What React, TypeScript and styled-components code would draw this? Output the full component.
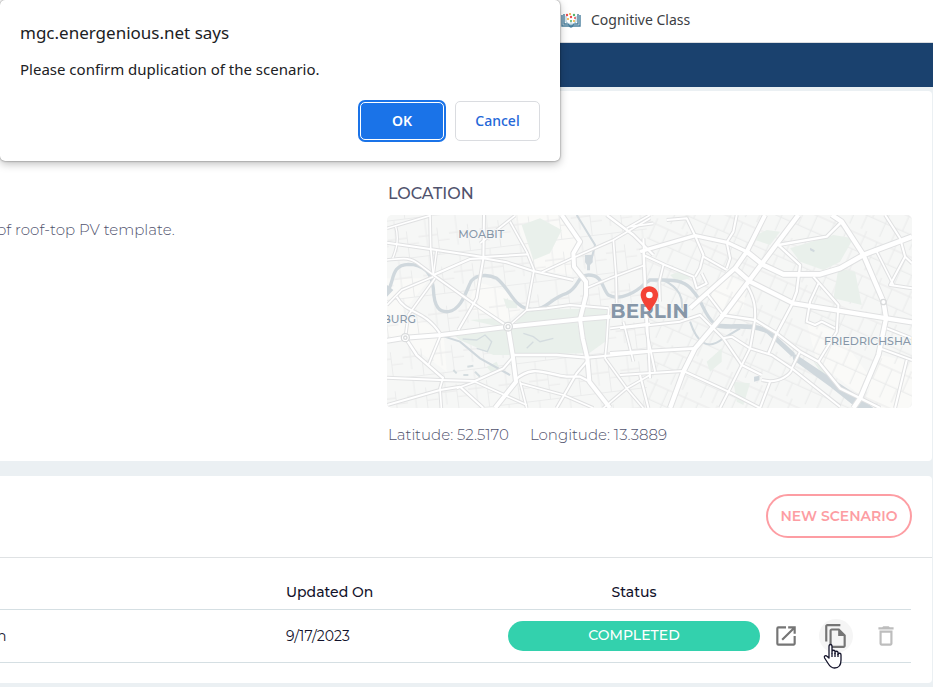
import React from "react";
import styled, { createGlobalStyle } from "styled-components";
import { MdDeleteOutline, MdOpenInNew, MdOutlineFileCopy } from "react-icons/md";

const GlobalStyle = createGlobalStyle`
  *, *::before, *::after { box-sizing: border-box; }
  body {
    margin: 0;
    background: #ebf0f3;
    color: #12122b;
    font-family: Montserrat, Inter, sans-serif;
    font-size: 14px;
    overflow-x: hidden;
  }
  button { font-family: inherit; cursor: pointer; }
`;

const Page = styled.div`
  position: relative;
  min-height: 100vh;
`;

const BookmarkBar = styled.nav`
  display: flex;
  align-items: center;
  height: 43px;
  padding: 0 0 3px 561px;
  background: #fff;
  border-bottom: 1px solid #dadce0;
`;

const Bookmark = styled.a`
  display: flex;
  align-items: center;
  gap: 10px;
  color: #3c4043;
  font: 14px/20px "Noto Sans", sans-serif;
  text-decoration: none;
  white-space: nowrap;
`;

const AppHeader = styled.header`
  height: 44px;
  background: #1a416e;
`;

const Content = styled.main`
  display: flex;
  flex-direction: column;
  gap: 15px;
  padding: 4px 1px 4px 0;
`;

const Card = styled.section`
  background: #fff;
  border-radius: 0 4px 4px 0;
`;

const ProjectCard = styled(Card)`
  display: grid;
  grid-template-columns: 14fr 19fr;
  padding: 92px 20px 16px 0;
  color: #50526d;
`;

const Description = styled.p`
  margin: 36px 0 0 -3px;
  font-size: 15px;
  line-height: 22px;
  font-weight: 300;
  white-space: nowrap;
`;

const SectionTitle = styled.h2`
  margin: 0 0 11px 1px;
  font-size: 16px;
  line-height: 21px;
  font-weight: 500;
  color: #50526d;
`;

const MapFrame = styled.svg`
  display: block;
  width: 100%;
  height: 193px;
  border-radius: 5px;
  background: #f6f7f6;
`;

const Coordinates = styled.div`
  display: flex;
  gap: 21px;
  margin: 16px 0 0 1px;
  font-size: 15px;
  line-height: 21px;
  font-weight: 300;
`;

const ScenarioCard = styled(Card)`
  padding-bottom: 20px;
`;

const ScenarioToolbar = styled.div`
  display: flex;
  justify-content: flex-end;
  padding: 18px 20px 19px;
  border-bottom: 1px solid #dfe2e4;
`;

const NewScenarioButton = styled.button`
  width: 146px;
  height: 44px;
  padding: 0;
  border: 2px solid #fd9da3;
  border-radius: 22px;
  background: #fff;
  color: #fd9da3;
  font-size: 14px;
  font-weight: 600;
  white-space: nowrap;
`;

const TableArea = styled.div`
  padding: 18px 21px 0 0;
`;

const ScenarioTable = styled.table`
  width: 100%;
  table-layout: fixed;
  border-collapse: collapse;
`;

const Column = styled.col<{ $width?: number }>`
  width: ${({ $width }) => ($width ? `${$width}px` : "auto")};
`;

const HeadCell = styled.th<{ $center?: boolean }>`
  height: 33px;
  padding: 0;
  border-bottom: 1px solid #d5dfe3;
  font-size: 14px;
  font-weight: 500;
  text-align: ${({ $center }) => ($center ? "center" : "left")};
`;

const Cell = styled.td`
  height: 53px;
  padding: 0;
  border-bottom: 1px solid #d5dfe3;
`;

const ScenarioName = styled.div`
  margin-left: -3px;
`;

const StatusPill = styled.div`
  height: 30px;
  border-radius: 15px;
  background: #33d1ad;
  color: #fff;
  line-height: 29px;
  font-weight: 500;
  text-align: center;
`;

const Actions = styled.div`
  display: flex;
  gap: 16px;
  padding-left: 9px;
`;

const IconButton = styled.button<{ $active?: boolean }>`
  position: relative;
  display: grid;
  place-items: center;
  width: 34px;
  height: 34px;
  padding: 0;
  border: 0;
  border-radius: 50%;
  background: ${({ $active }) => ($active ? "#f5f5f5" : "transparent")};
  color: #757575;
  &:disabled { color: #bdbdbd; }
`;

const Pointer = styled.svg`
  position: absolute;
  left: 4px;
  top: 24px;
  z-index: 1;
`;

const Dialog = styled.div`
  position: absolute;
  top: 0;
  left: 0;
  z-index: 2;
  width: 560px;
  padding: 20px;
  border-radius: 5px;
  background: #fff;
  box-shadow: 0 0 2px rgba(0, 0, 0, 0.55), 0 3px 8px rgba(0, 0, 0, 0.25);
  color: #202124;
  font-family: "Noto Sans", sans-serif;
`;

const DialogTitle = styled.h1`
  margin: 0;
  font-size: 17px;
  line-height: 26px;
  font-weight: 400;
`;

const DialogText = styled.p`
  margin: 12px 0 20px;
  font-size: 15px;
  line-height: 23px;
`;

const DialogButtons = styled.div`
  display: flex;
  align-items: center;
  justify-content: flex-end;
  gap: 11px;
`;

const DialogButton = styled.button<{ $primary?: boolean }>`
  width: ${({ $primary }) => ($primary ? 84 : 85)}px;
  height: ${({ $primary }) => ($primary ? 38 : 40)}px;
  padding: 0 0 2px;
  border: 1px solid ${({ $primary }) => ($primary ? "#fff" : "#dadce0")};
  border-radius: 5px;
  background: ${({ $primary }) => ($primary ? "#1a73e8" : "#fff")};
  box-shadow: ${({ $primary }) => ($primary ? "0 0 0 2px #1a73e8" : "none")};
  color: ${({ $primary }) => ($primary ? "#fff" : "#2467d8")};
  font-size: 14px;
  font-weight: ${({ $primary }) => ($primary ? 600 : 500)};
`;

type Road = [width: number, d: string];

const westRoads: Road[] = [
  [5, "M21 160L150 122"],
  [5, "M150 120L152 220L160 300"],
  [6, "M21 203L150 222L308 246L445 238"],
  [4, "M47 155Q60 200 38 250"],
  [5, "M21 255C70 250 90 245 120 270L160 300"],
  [4, "M170 225L160 300"],
  [6, "M160 300L270 252L310 250L380 262L460 288L580 315"],
  [6, "M312 120L310 250L290 370L235 465"],
  [6, "M160 300L280 385L384 455"],
  [5, "M405 122L300 205M390 140L440 230L462 285L440 405L390 450"],
  [5, "M485 292L580 248L700 195L810 130"],
  [5, "M160 305L65 345L21 390"],
  [5, "M165 310L85 420L76 488"],
  [6, "M50 365C80 420 130 400 180 475"],
  [5, "M180 485L145 570"],
  [7, "M76 488L110 540L190 610"],
  [6, "M21 608L180 615L285 618L370 580L400 545"],
  [5, "M184 699L180 640L190 605"],
  [6, "M21 690L180 645L240 635L310 699"],
  [5, "M230 640L285 620L440 690"],
  [7, "M400 540L530 540L622 548L810 530"],
  [7, "M405 615C460 565 500 600 560 605L600 605L630 620"],
  [5, "M420 620L440 699M420 625L550 660L640 699"],
  [6, "M620 560L590 595L530 699"],
  [5, "M675 550L740 640L790 699M740 640L810 600M740 640L670 699"],
  [5, "M686 400L680 500L675 550"],
  [6, "M440 405L500 400L570 390L686 400"],
  [5, "M700 195L708 300L710 390"],
  [7, "M680 120L760 180L820 240"],
  [6, "M790 190L795 320L810 610"],
  [5, "M618 340L690 310L795 270"],
  [5, "M740 160L810 120M690 460L810 445M730 440L760 560"],
  [12, "M21 497L76 488L184 480L384 455L600 433L690 425"],
  [12, "M600 433L608 490L622 550L628 620L690 699"],
  [12, "M384 455L398 540L408 620L345 699"],
  [12, "M545 120L600 200L580 235L582 275L618 320L618 360L600 433"],
];

const eastRoads: Road[] = [
  [5, "M-30 65L40 55"],
  [6, "M80 45L140 40L165 92L190 150L180 190L165 215"],
  [6, "M290 30L280 80L260 112L270 160L260 190"],
  [6, "M190 155L260 195"],
  [7, "M415 120L560 95L605 50"],
  [7, "M415 120L480 180L470 260L455 300L410 385L385 445"],
  [6, "M520 215L595 300L590 380L535 470"],
  [6, "M535 235L510 290L500 350L525 360L545 350L585 370"],
  [6, "M10 150L75 180L160 215L170 250L200 235L185 205"],
  [6, "M320 240C350 290 345 320 345 345L330 430L265 560L240 609"],
  [7, "M240 330L345 345L410 385L480 440L535 470L600 550L720 609"],
  [8, "M-90 445L0 440L165 430"],
  [6, "M-60 370L120 350L180 330L250 400L305 480L365 510"],
  [6, "M10 140L20 380L45 500"],
  [6, "M-60 510L130 498L265 560L360 609"],
  [6, "M250 400L275 395L330 430L395 450L455 490L600 605"],
  [6, "M390 530L360 609M365 525C420 540 460 500 455 490L480 440"],
  [6, "M735 30L780 100L795 155L816 175M795 155L750 240L816 250"],
  [5, "M705 130L760 240M70 180L58 230L60 290"],
  [6, "M200 265L250 330"],
  [6, "M720 430L816 465M800 465L765 609M740 370L816 400M0 510L25 609"],
  [12, "M375 30L320 140L285 190L150 310"],
  [13, "M475 30L325 230L250 330L165 430L130 500L90 609"],
  [10, "M0 140L165 92L260 112L320 140"],
  [14, "M320 140L370 180L430 208L540 208L600 190L670 150L816 95"],
  [13, "M575 30L605 50L670 150L730 290L738 340L715 450L660 580L640 609"],
  [13, "M285 190L330 230L460 295L740 340L816 352"],
];

function RoadLayer({ roads, casing }: { roads: Road[]; casing?: boolean }) {
  return (
    <g fill="none" stroke={casing ? "#e0e1e2" : "#fff"} strokeLinejoin="round">
      {roads.map(([width, d]) => (
        <path key={d} d={d} strokeWidth={casing ? width + 6 : width} />
      ))}
    </g>
  );
}

function BerlinMap() {
  return (
    <MapFrame viewBox="21 120 1575 579" preserveAspectRatio="xMidYMid slice" role="img" aria-label="Map of Berlin">
      <defs>
        <pattern id="streets-west" width="92" height="118" patternUnits="userSpaceOnUse" patternTransform="rotate(-7)">
          <path d="M0 22H92M0 80H58M24 22V118M58 0V22M58 60V118M58 98H92" fill="none" stroke="#ebecec" strokeWidth="3" />
        </pattern>
        <pattern id="streets-east" width="98" height="110" patternUnits="userSpaceOnUse" patternTransform="rotate(24)">
          <path d="M0 18H98M0 66H98M30 0V66M72 18V110M12 66V110" fill="none" stroke="#e9eaea" strokeWidth="3" />
        </pattern>
      </defs>

      <g fill="#fafaf8">
        <path d="M21 310L150 310L70 410L190 470L200 590L90 510L21 480Z" />
        <path d="M400 120H550L590 200L575 300L465 285Z" />
        <path d="M290 320L390 350L430 400L380 440L260 400Z" />
        <path d="M1280 440L1370 470L1480 620L1440 660L1310 560ZM1500 540L1596 560V699H1450Z" />
        <path d="M1040 300L1100 330L1090 400L1030 430L990 360Z" />
      </g>
      <path d="M21 120H800V699H21Z" fill="url(#streets-west)" />
      <path d="M800 120H1596V699H800Z" fill="url(#streets-east)" />

      <g fill="#e9f0eb">
        <path d="M425 150L480 130L545 165L510 235L460 255Z" />
        <path d="M270 435L340 430L384 455L590 435L610 535L410 540L340 540L240 495L215 475L370 458Z" />
        <path d="M440 405L680 400L675 500L620 540L600 435L400 452Z" />
        <path d="M370 370L410 380L412 400L380 400Z" />
        <path d="M320 575L350 560L360 585L340 600Z" />
        <path d="M1230 220L1360 180L1420 190L1380 260L1330 285L1260 260Z" />
        <path d="M1375 280L1425 290L1445 390L1360 370Z" />
        <path d="M1110 190L1160 165L1200 170L1170 210Z" />
        <path d="M870 300L910 285L930 310L890 320Z" />
        <path d="M980 560L1025 520L1025 560L990 590ZM1300 560L1330 575L1380 640L1350 630Z" />
        <path d="M1060 620L1110 625L1090 690L1070 680Z" />
      </g>
      <g fill="none" stroke="#d4dcdf" strokeWidth="4">
        <path d="M248 492L290 495L315 480L335 500L322 530L290 520M430 475L460 485L480 500L520 490M460 500L440 520" />
        <path d="M220 585L230 595M250 600L265 600M285 590L300 605M262 575L280 572" strokeWidth="6" />
      </g>
      <g fill="none" stroke="#d0d8dd">
        <path strokeWidth="10" d="M21 350C45 325 28 270 85 268C130 268 155 290 160 340C162 400 180 412 205 410C240 405 255 360 270 325C280 300 320 295 350 310C390 340 400 400 455 404C500 405 510 370 560 355C600 335 590 300 625 300C670 300 665 340 685 360C720 380 770 350 795 325L810 315H850C890 315 920 320 940 350C970 380 970 420 1005 448" />
        <path strokeWidth="6" d="M184 482L240 500L300 550L390 600M590 120L645 210L635 250M850 315C900 340 910 370 905 405M930 440C950 500 980 530 1030 490L1080 460" />
        <path strokeWidth="14" d="M1000 448C1040 465 1110 440 1165 470L1240 540" />
      </g>
      <path fill="#d0d8dd" d="M615 240H638V262L630 270V286H621V270L615 262ZM1235 535L1250 540L1445 670L1480 699H1430L1350 635L1240 555ZM21 330L40 345L21 365ZM1122 605L1138 602V616L1122 620ZM1290 218L1304 226L1302 232L1290 226Z" />

      <RoadLayer roads={westRoads} casing />
      <g transform="translate(780 90)"><RoadLayer roads={eastRoads} casing /></g>
      <RoadLayer roads={westRoads} />
      <g transform="translate(780 90)"><RoadLayer roads={eastRoads} /></g>

      <g fill="#fff" stroke="#d9dbdc" strokeWidth="4">
        <circle cx="384" cy="455" r="13" />
        <circle cx="384" cy="455" r="6" />
        <circle cx="76" cy="488" r="12" />
        <circle cx="76" cy="488" r="5" />
        <circle cx="1510" cy="381" r="8" />
      </g>

      <g fill="#8797a8" stroke="#f7f8f8" strokeWidth="5" paintOrder="stroke" fontFamily="Montserrat, Inter, sans-serif" fontWeight="500">
        <text x="235" y="188" fontSize="33">MOABIT</text>
        <text x="108" y="445" fontSize="33" textAnchor="end">CHARLOTTENBURG</text>
        <text x="691" y="430" fontSize="60" fontWeight="700">BERLIN</text>
        <text x="1332" y="509" fontSize="33">FRIEDRICHSHAIN</text>
      </g>
      <path
        transform="translate(763 326) scale(3.75)"
        fill="#f44336"
        d="M12 2C8.13 2 5 5.13 5 9c0 5.25 7 13 7 13s7-7.75 7-13c0-3.87-3.13-7-7-7z"
      />
      <circle cx="808" cy="360" r="10" fill="#fff" />
    </MapFrame>
  );
}

function BookLogo() {
  return (
    <svg width="20" height="16" viewBox="0 0 20 16" aria-hidden="true">
      <path d="M1 3V14H8L10 15L12 14H19V3M3 2V12H7L10 14L13 12H17V2" fill="none" stroke="#477d9c" strokeWidth="1.4" />
      <path d="M5 4V10L10 13V8M15 4V10L10 13" fill="none" stroke="#a3c5d5" />
      <g fill="#e84b50"><circle cx="6" cy="3" r="1.2" /><circle cx="10" cy="5" r="1.2" /><circle cx="14" cy="6" r="1" /></g>
      <g fill="#f3ae35"><circle cx="9" cy="2" r="1.1" /><circle cx="7" cy="7" r="1" /><circle cx="13" cy="9" r="1" /></g>
      <g fill="#55b56a"><circle cx="13" cy="3" r="1.2" /><circle cx="10" cy="9" r="1" /></g>
    </svg>
  );
}

function HandPointer() {
  return (
    <Pointer width="20" height="26" viewBox="0 0 20 26" aria-hidden="true">
      <path
        d="M6 15V3.5C6 .8 9 .8 9 3.5V10V8.5C9 6.8 12 6.8 12 8.5V10.5V9.5C12 7.8 15 7.8 15 9.5V11.5C15 9.8 18 9.8 18 11.7V17C18 21.5 16 25 11.5 25C7.5 25 6 22 4.5 19.5L1.6 15C.6 13 2.8 12 4 13.2Z"
        fill="#fff"
        stroke="#14142b"
        strokeWidth="1.3"
        strokeLinejoin="round"
      />
      <path d="M9 10V14M12 10V14M15 11V14" stroke="#14142b" strokeWidth="1.3" />
    </Pointer>
  );
}

export default function App() {
  return (
    <Page>
      <GlobalStyle />
      <BookmarkBar aria-label="Bookmarks">
        <Bookmark href="#cognitive-class"><BookLogo />Cognitive Class</Bookmark>
      </BookmarkBar>
      <AppHeader />
      <Content>
        <ProjectCard>
          <Description>of roof-top PV template.</Description>
          <div>
            <SectionTitle>LOCATION</SectionTitle>
            <BerlinMap />
            <Coordinates>
              <span>Latitude: 52.5170</span>
              <span>Longitude: 13.3889</span>
            </Coordinates>
          </div>
        </ProjectCard>
        <ScenarioCard>
          <ScenarioToolbar>
            <NewScenarioButton type="button">NEW SCENARIO</NewScenarioButton>
          </ScenarioToolbar>
          <TableArea>
            <ScenarioTable>
              <colgroup>
                <Column />
                <Column $width={222} />
                <Column $width={252} />
                <Column $width={151} />
              </colgroup>
              <thead>
                <tr>
                  <HeadCell aria-label="Name" />
                  <HeadCell scope="col">Updated On</HeadCell>
                  <HeadCell scope="col" $center>Status</HeadCell>
                  <HeadCell aria-label="Actions" />
                </tr>
              </thead>
              <tbody>
                <tr>
                  <Cell><ScenarioName>n</ScenarioName></Cell>
                  <Cell>9/17/2023</Cell>
                  <Cell><StatusPill>COMPLETED</StatusPill></Cell>
                  <Cell>
                    <Actions>
                      <IconButton type="button" aria-label="Open scenario"><MdOpenInNew size={26} /></IconButton>
                      <IconButton type="button" aria-label="Duplicate scenario" $active>
                        <MdOutlineFileCopy size={26} />
                        <HandPointer />
                      </IconButton>
                      <IconButton type="button" aria-label="Delete scenario" disabled><MdDeleteOutline size={26} /></IconButton>
                    </Actions>
                  </Cell>
                </tr>
              </tbody>
            </ScenarioTable>
          </TableArea>
        </ScenarioCard>
      </Content>
      <Dialog role="alertdialog" aria-labelledby="dialog-title" aria-describedby="dialog-text">
        <DialogTitle id="dialog-title">mgc.energenious.net says</DialogTitle>
        <DialogText id="dialog-text">Please confirm duplication of the scenario.</DialogText>
        <DialogButtons>
          <DialogButton type="button" $primary>OK</DialogButton>
          <DialogButton type="button">Cancel</DialogButton>
        </DialogButtons>
      </Dialog>
    </Page>
  );
}
